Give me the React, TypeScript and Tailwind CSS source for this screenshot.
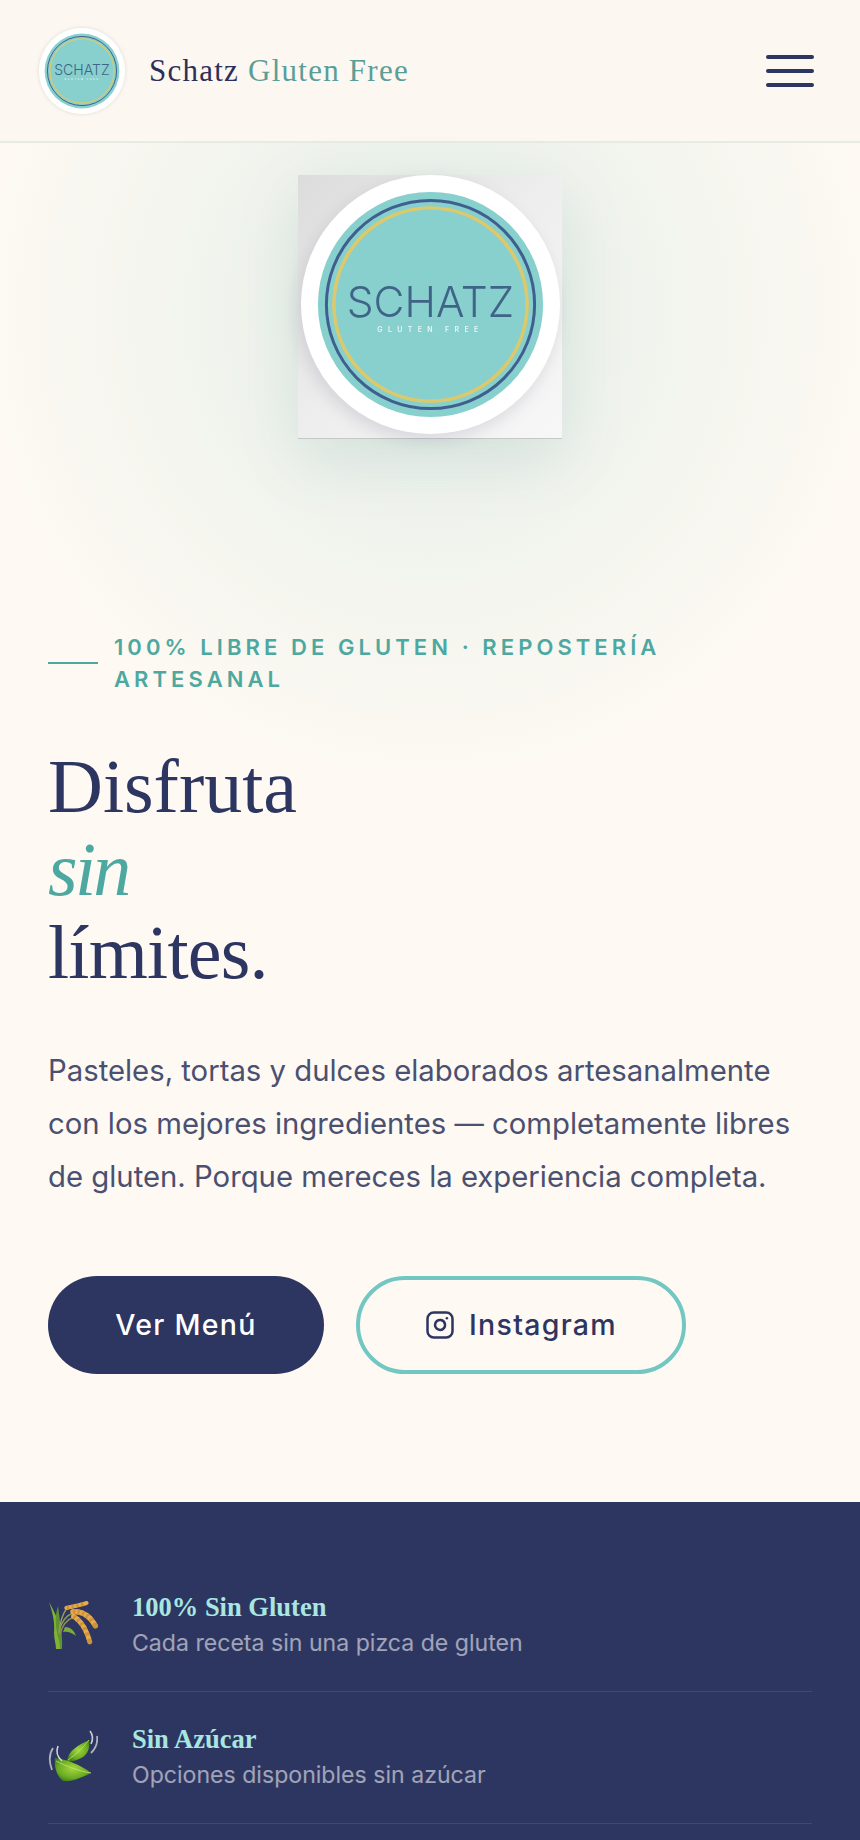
import { Instagram } from 'lucide-react'

const SERIF = "font-['Liberation_Serif',serif]"
const SANS = "font-['Inter',sans-serif]"

// grains along a quadratic curve, for the rice emoji
function grains(a: number[], c: number[], b: number[], n: number, rx: number, ry: number) {
  return Array.from({ length: n }, (_, i) => {
    const t = (i + 0.5) / n
    const x = (1 - t) * (1 - t) * a[0] + 2 * t * (1 - t) * c[0] + t * t * b[0]
    const y = (1 - t) * (1 - t) * a[1] + 2 * t * (1 - t) * c[1] + t * t * b[1]
    const dx = 2 * (1 - t) * (c[0] - a[0]) + 2 * t * (b[0] - c[0])
    const dy = 2 * (1 - t) * (c[1] - a[1]) + 2 * t * (b[1] - c[1])
    const angle = (Math.atan2(dy, dx) * 180) / Math.PI
    return { x, y, angle, rx, ry, shade: i % 2 === 0 ? '#e6ab4c' : '#cf9238' }
  })
}

const PANICLES = [
  ...grains([18, 9], [28, 7], [39, 4], 9, 2.8, 2.1),
  ...grains([24, 13], [39, 11], [48, 28], 12, 3, 2.8),
  ...grains([25, 17], [37, 24], [42, 44], 12, 3, 2.6),
]

function RiceIcon() {
  return (
    <svg viewBox="0 0 50 50" className="h-[50px] w-[50px]" aria-hidden="true">
      <path d="M1 3 C5 15 7 24 6 34 C6 40 8 45 8 50 L14 50 C13 40 13 30 10 22 C7 14 4 8 1 3Z" fill="#7fb236" />
      <path d="M10 7 C7 16 7 26 10 38 C12 44 12 47 12 50 L14 50 C15 38 12 24 10 7Z" fill="#5c9530" />
      <path d="M11 34 C12 22 16 13 19 9" fill="none" stroke="#9a9d55" strokeWidth="1.4" />
      <path d="M11 32 C14 22 19 16 25 14" fill="none" stroke="#8f9a50" strokeWidth="1.4" />
      <path d="M12 36 C14 26 20 20 26 18" fill="none" stroke="#8f8f50" strokeWidth="1.4" />
      <path d="M17 28 C22 28 26 31 28 37 C24 34 20 32 15 33Z" fill="#7dab3a" />
      {PANICLES.map((g, i) => (
        <ellipse key={i} cx={g.x} cy={g.y} rx={g.rx} ry={g.ry} fill={g.shade} transform={`rotate(${g.angle} ${g.x} ${g.y})`} />
      ))}
    </svg>
  )
}

function LeafIcon() {
  return (
    <svg viewBox="0 0 50 52" className="h-[52px] w-[50px]" aria-hidden="true">
      <defs>
        <radialGradient id="leafFill" cx="50%" cy="45%" r="60%">
          <stop offset="0%" stopColor="#a6d63f" />
          <stop offset="70%" stopColor="#68ab22" />
          <stop offset="100%" stopColor="#3f7d1a" />
        </radialGradient>
      </defs>
      <path d="M19 31 C20 21 30 15 41 10 C43 19 38 27 31 29 C27 31 23 32 19 31Z" fill="url(#leafFill)" />
      <path d="M20 30 C27 25 34 19 41 10" fill="none" stroke="#c4e36e" strokeWidth="0.8" />
      <path d="M7 28 C18 29 33 35 43 43 C35 47 25 52 15 51 C9 46 6 38 7 28Z" fill="url(#leafFill)" />
      <path d="M8 31 C18 36 30 41 43 43" fill="none" stroke="#c4e36e" strokeWidth="0.8" />
      <path d="M5 18 C1 24 1 32 4 40" fill="none" stroke="#aeb2bd" strokeWidth="1.8" />
      <path d="M10 16 C8 21 9 27 14 31" fill="none" stroke="#d6d8de" strokeWidth="1.6" />
      <path d="M42 1 C45 5 45 10 43 14" fill="none" stroke="#c9ccd4" strokeWidth="1.6" />
      <path d="M49 6 C50 13 47 19 43 23" fill="none" stroke="#aeb2bd" strokeWidth="1.8" />
    </svg>
  )
}

function LogoMark() {
  return (
    <svg viewBox="0 0 260 260" className="h-full w-full" aria-hidden="true">
      <circle cx="130" cy="130" r="130" fill="#ffffff" />
      <circle cx="130" cy="130" r="113" fill="#87d0ce" />
      <circle cx="130" cy="130" r="104.5" fill="none" stroke="#3f5f8e" strokeWidth="3" />
      <circle cx="130" cy="130" r="97" fill="none" stroke="#dcc96c" strokeWidth="3.5" />
      <text x="130" y="143" textAnchor="middle" fontFamily="Inter, sans-serif" fontWeight="300" fontSize="43" fill="#3f6487" textLength="168" lengthAdjust="spacingAndGlyphs">
        SCHATZ
      </text>
      <text x="130" y="158" textAnchor="middle" fontFamily="Inter, sans-serif" fontWeight="600" fontSize="7" letterSpacing="5.4" fill="#e8f7f6">
        GLUTEN FREE
      </text>
    </svg>
  )
}

const FEATURES = [
  { title: '100% Sin Gluten', text: 'Cada receta sin una pizca de gluten', icon: <RiceIcon /> },
  { title: 'Sin Azúcar', text: 'Opciones disponibles sin azúcar', icon: <LeafIcon /> },
]

export default function App() {
  return (
    <div className={`flex h-[1840px] flex-col overflow-hidden bg-[#fef9f3] ${SANS}`}>
      <header className="flex h-[143px] shrink-0 items-center justify-between border-b-2 border-[#e6ebe4] bg-[#fdf7f1] pl-[39px] pr-[46px]">
        <div className="flex items-center gap-[24px]">
          <div className="h-[86px] w-[86px] rounded-full shadow-[0_0_4px_rgba(0,0,0,0.12)]">
            <LogoMark />
          </div>
          <span className={`${SERIF} mt-[2px] text-[31px] tracking-[0.04em] text-[#2d2f58]`}>
            Schatz <span className="text-[#5a9e98]">Gluten Free</span>
          </span>
        </div>
        <div className="flex w-[48px] flex-col gap-[10px]">
          <span className="h-[4px] rounded-full bg-[#2d3561]" />
          <span className="h-[4px] rounded-full bg-[#2d3561]" />
          <span className="h-[4px] rounded-full bg-[#2d3561]" />
        </div>
      </header>

      <section className="h-[1359px] shrink-0 bg-[radial-gradient(ellipse_460px_480px_at_50%_170px,rgba(126,200,190,0.2),transparent_100%)] px-[48px] pt-[32px]">
        <div className="flex justify-center">
          <div className="flex h-[264px] w-[264px] items-start justify-center border-b border-[#c4c8c8] bg-gradient-to-br from-[#dcdcdc] via-[#eeeeee] to-[#f7f7f7] shadow-[0_20px_60px_rgba(70,120,120,0.14)]">
            <div className="h-[259px] w-[259px] drop-shadow-[-3px_6px_8px_rgba(80,80,120,0.16)]">
              <LogoMark />
            </div>
          </div>
        </div>

        <div className="mt-[192px] flex items-start gap-[16px]">
          <span className="mt-[31px] h-[2px] w-[50px] shrink-0 bg-[#4da8a0]" />
          <p className="w-[600px] text-[22px] font-semibold leading-[32px] tracking-[0.185em] text-[#4da8a0]">
            100% LIBRE DE GLUTEN · REPOSTERÍA ARTESANAL
          </p>
        </div>

        <h1 className={`${SERIF} mt-[50px] text-[76px] font-normal leading-[83px] text-[#2d3561]`}>
          Disfruta
          <br />
          <em className="tracking-[-0.035em] text-[#4da8a0]">sin</em>
          <br />
          <span className="tracking-[-0.01em]">límites.</span>
        </h1>

        <p className="mt-[51px] w-[772px] text-[29.3px] leading-[52.8px] text-[#4a5070]">
          Pasteles, tortas y dulces elaborados artesanalmente con los mejores ingredientes — completamente libres de gluten. Porque mereces la experiencia completa.
        </p>

        <div className="mt-[73px] flex gap-[32px]">
          <button type="button" className="flex h-[98px] w-[276px] items-center justify-center rounded-[49px] bg-[#2d3561] text-[28.5px] font-medium tracking-[0.045em] text-white">
            Ver Menú
          </button>
          <button type="button" className="flex h-[98px] w-[330px] items-center justify-center gap-[14px] rounded-[49px] border-4 border-[#72c7c2] text-[28.5px] font-medium tracking-[0.045em] text-[#2d3561]">
            <Instagram size={30} strokeWidth={2} />
            Instagram
          </button>
        </div>
      </section>

      <section className="flex-1 bg-[#2d3561] px-[48px] pt-[58px]">
        {FEATURES.map((f) => (
          <div key={f.title} className="flex h-[132px] items-center gap-[34px] border-b border-white/10">
            <div className="mb-[4px] w-[50px] shrink-0">{f.icon}</div>
            <div>
              <p className={`${SERIF} mt-[-1px] text-[26.5px] font-bold leading-[35px] text-[#a8e6e0]`}>{f.title}</p>
              <p className="text-[23.1px] leading-[36px] text-white/55">{f.text}</p>
            </div>
          </div>
        ))}
      </section>
    </div>
  )
}
